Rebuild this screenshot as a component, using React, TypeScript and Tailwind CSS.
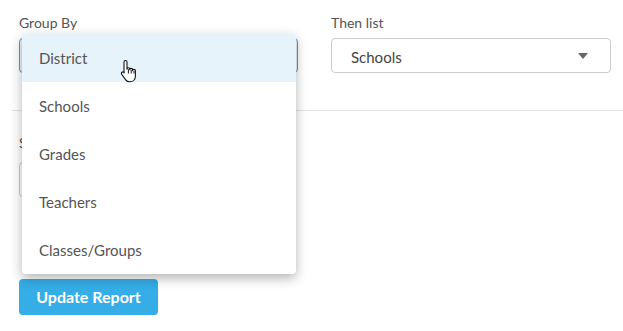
import React from "react";

const font = { fontFamily: "Lato, 'Noto Sans', sans-serif" };

function Caret() {
  return (
    <svg width="10" height="6" viewBox="0 0 10 6" className="shrink-0">
      <path d="M0 0 L10 0 L5 6 Z" fill="#666" />
    </svg>
  );
}

function HandCursor() {
  return (
    <svg width="18" height="24" viewBox="0 0 18 24" className="absolute left-[120px] top-[59px]">
      <path
        d="M5.5 1.5c.9 0 1.5.7 1.5 1.5v7.2c0-.8.6-1.4 1.4-1.4s1.4.6 1.4 1.4v.6c0-.8.6-1.4 1.4-1.4s1.4.6 1.4 1.4v.8c0-.8.6-1.4 1.4-1.4s1.4.6 1.4 1.4v5.6c0 3.2-2.3 5.6-5.4 5.6H9.6c-1.7 0-2.9-.7-3.9-2L1.8 15.5c-.6-.8-.5-1.8.2-2.3.7-.5 1.6-.4 2.2.3L4 14V3c0-.8.6-1.5 1.5-1.5z"
        fill="#fff"
        stroke="#111"
        strokeWidth="1.1"
        strokeLinejoin="round"
      />
      <path d="M8.4 10.2v4.3M11.2 10.9v3.6M14 11.7v2.8" stroke="#111" strokeWidth="1" />
    </svg>
  );
}

export default function App() {
  const items = ["District", "Schools", "Grades", "Teachers", "Classes/Groups"];
  return (
    <div className="relative w-[623px] h-[331px] bg-white overflow-hidden text-[#555]" style={font}>
      <div className="flex gap-[33px] pl-[19px] pt-[13px]">
        <div className="w-[279px]">
          <div className="text-[14px] leading-[20px] h-[25px] text-[#555]">Group By</div>
          <div className="h-[35px] rounded-[4px] border border-[#4a9fe0] bg-[#e8f4fc]"></div>
        </div>
        <div className="w-[280px]">
          <div className="text-[14px] leading-[20px] h-[25px] text-[#555]">Then list</div>
          <div className="h-[35px] rounded-[4px] border border-[#ccc] flex items-center pl-[19px] pr-[22px] justify-between">
            <span className="text-[15px] text-[#444] leading-[20px] pt-[2px]">Schools</span>
            <Caret />
          </div>
        </div>
      </div>
      <div className="ml-[12px] mt-[37px] border-t border-[#e5e5e5]"></div>
      <div className="pl-[19px] pt-[22px]">
        <div className="text-[14px] leading-[20px] h-[29px] text-[#555]">Show</div>
        <div className="h-[35px] w-[240px] rounded-[4px] border border-[#ccc]"></div>
        <button className="mt-[82px] w-[139px] h-[36px] rounded-[4px] bg-[#35ade6] text-white font-bold text-[16px]">
          Update Report
        </button>
      </div>

      <div className="absolute left-[22px] top-[34px] w-[274px] bg-white rounded-[4px] shadow-[0_4px_12px_rgba(0,0,0,0.3)] overflow-hidden">
        {items.map((it, i) => (
          <div
            key={it}
            className={
              "h-[48px] flex items-center pl-[17px] text-[15px] text-[#555] " +
              (i === 0 ? "bg-[#e6f3fb]" : "")
            }
          >
            {it}
          </div>
        ))}
      </div>
      <HandCursor />
    </div>
  );
}
